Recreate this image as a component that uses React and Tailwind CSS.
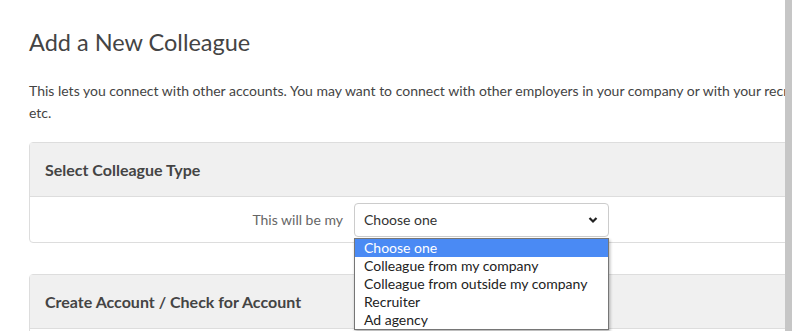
import React from 'react';

const options = [
  'Choose one',
  'Colleague from my company',
  'Colleague from outside my company',
  'Recruiter',
  'Ad agency',
];

export default function App() {
  return (
    <div className="flex h-[331px] w-[792px] overflow-hidden bg-white font-['Lato',sans-serif] text-[#444]">
      <div className="flex-1 overflow-hidden">
        <div className="w-[1000px] pl-[29px] pt-[26px]">
          <h1 className="text-[23.5px] leading-[32px] font-normal text-[#444]">Add a New Colleague</h1>

          <p className="mt-[22px] text-[14px] leading-[21.5px] text-[#444]">
            <span className="whitespace-nowrap">
              This lets you connect with other accounts. You may want to connect with other employers in your company or with your recruiters, ad agencies,
            </span>
            <br />
            etc.
          </p>

          {/* Colleague type */}
          <div className="mt-[19px] rounded-[4px] border border-[#ddd]">
            <div className="flex h-[54px] items-center border-b border-[#ddd] bg-[#f0f0f0] px-[15px] text-[16px] font-bold text-[#444]">
              Select Colleague Type
            </div>
            <div className="flex h-[45px] items-center">
              <label className="w-[324px] pr-[11px] text-right text-[14px] text-[#666]">This will be my</label>
              <div className="relative">
                <div className="flex h-[34px] w-[255px] items-center justify-between rounded-[4px] border border-[#ccc] px-[9px] text-[14px] text-[#333]">
                  <span>Choose one</span>
                  <svg width="10" height="8" viewBox="0 0 10 8" className="mr-[1px]">
                    <path d="M1.5 2 L5 5.5 L8.5 2" fill="none" stroke="#222" strokeWidth="2.2" />
                  </svg>
                </div>
                <ul className="absolute left-0 top-[35px] z-10 w-[255px] border border-[#767676] bg-white py-0 text-[14px] leading-[18px] text-[#222] shadow-[1px_2px_3px_rgba(0,0,0,0.3)]">
                  {options.map((o, i) => (
                    <li key={o} className={i === 0 ? 'bg-[#4a8af4] px-[9px] text-white' : 'px-[9px]'}>
                      {o}
                    </li>
                  ))}
                </ul>
              </div>
            </div>
          </div>

          {/* Account */}
          <div className="mt-[31px] rounded-[4px] border border-[#ddd]">
            <div className="flex h-[54px] items-center border-b border-[#ddd] bg-[#f0f0f0] px-[15px] text-[16px] font-bold text-[#444]">
              Create Account / Check for Account
            </div>
            <div className="h-[60px]" />
          </div>
        </div>
      </div>
      <div className="w-[7px] shrink-0 bg-[#c6c6c6]" />
    </div>
  );
}
